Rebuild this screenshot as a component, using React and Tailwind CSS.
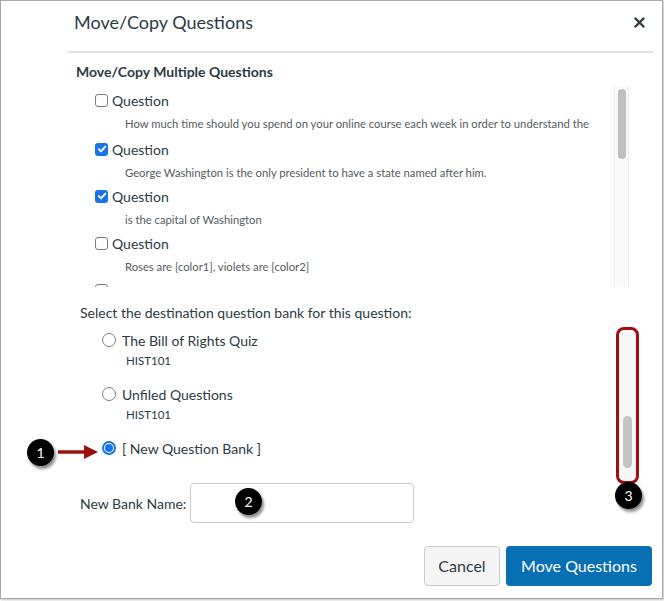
import React from 'react';

const questions = [
  { checked: false, text: 'How much time should you spend on your online course each week in order to understand the' },
  { checked: true, text: 'George Washington is the only president to have a state named after him.' },
  { checked: true, text: 'is the capital of Washington' },
  { checked: false, text: 'Roses are [color1], violets are [color2]' },
];

const banks = [
  { name: 'The Bill of Rights Quiz', course: 'HIST101' },
  { name: 'Unfiled Questions', course: 'HIST101' },
];

function Badge({ n, className }) {
  return (
    <div
      className={`absolute w-[27px] h-[27px] rounded-full bg-black text-white text-[14px] flex items-center justify-center shadow-[2px_3px_3px_rgba(0,0,0,0.45)] ${className}`}
    >
      {n}
    </div>
  );
}

function Checkbox({ checked }) {
  if (checked) {
    return (
      <span className="w-[13px] h-[13px] rounded-[3px] bg-[#1a73e8] flex items-center justify-center">
        <svg width="10" height="10" viewBox="0 0 10 10">
          <path d="M1.8 5.2 L4 7.4 L8.3 2.6" fill="none" stroke="white" strokeWidth="1.9" strokeLinecap="round" strokeLinejoin="round" />
        </svg>
      </span>
    );
  }
  return <span className="w-[13px] h-[13px] rounded-[3px] border border-[#7d7d7d] bg-white" />;
}

function Radio({ checked }) {
  if (checked) {
    return (
      <span className="w-[14px] h-[14px] rounded-full border-[2px] border-[#1a73e8] flex items-center justify-center">
        <span className="w-[8px] h-[8px] rounded-full bg-[#1a73e8]" />
      </span>
    );
  }
  return <span className="w-[14px] h-[14px] rounded-full border border-[#7d7d7d] bg-white" />;
}

export default function App() {
  return (
    <div className="w-[664px] h-[601px] bg-white relative text-[#2d3b45]" style={{ fontFamily: 'Lato, "Open Sans", sans-serif' }}>
      <div className="w-[663px] h-[599px] border border-[#a9a9a9] shadow-[1px_1px_2px_rgba(0,0,0,0.25)] bg-white">
        {/* header */}
        <div className="ml-[67px] w-[585px] h-[52px] border-b-2 border-[#dfe3e6] flex items-start justify-between pt-[9px]">
          <h1 className="pl-[6px] text-[18px] leading-[24px]">Move/Copy Questions</h1>
          <svg width="11" height="11" viewBox="0 0 11 11" className="mt-[7px] mr-[8px]">
            <path d="M1.5 1.5 L9.5 9.5 M9.5 1.5 L1.5 9.5" stroke="#2d3b45" strokeWidth="2.4" strokeLinecap="round" />
          </svg>
        </div>

        {/* multiple questions */}
        <div className="ml-[75px] w-[553px]">
          <h2 className="mt-[9px] text-[14px] leading-[20px] font-bold">Move/Copy Multiple Questions</h2>
          <div className="mt-[4px] h-[201px] flex overflow-hidden">
            <div className="flex-1 pt-[4px] pl-[19px]">
              {questions.map((q, i) => (
                <div key={i} className={i === 0 ? 'mb-[7px]' : 'mb-[5px]'}>
                  <div className="h-[20px] flex items-center gap-[4px] text-[14px]">
                    <Checkbox checked={q.checked} />
                    <span>Question</span>
                  </div>
                  <div className="mt-[6px] h-[16px] pl-[30px] text-[11.25px] leading-[16px] text-[#555c61] whitespace-nowrap">{q.text}</div>
                </div>
              ))}
              <div className="h-[20px] flex items-center">
                <Checkbox checked={false} />
              </div>
            </div>
            <div className="w-[15px] h-full bg-[#fafafa] border-x border-[#ececec] pt-[3px] flex justify-center">
              <div className="w-[8px] h-[70px] rounded-full bg-[#c1c1c1]" />
            </div>
          </div>
        </div>

        {/* destination */}
        <div className="ml-[79px]">
          <p className="mt-[16px] text-[14px] leading-[20px]">Select the destination question bank for this question:</p>
          <div className="mt-[7px] pl-[22px]">
            {banks.map((b) => (
              <div key={b.name} className="h-[54px]">
                <div className="h-[20px] flex items-center gap-[6px] text-[14px]">
                  <Radio checked={false} />
                  <span>{b.name}</span>
                </div>
                <div className="mt-[3px] pl-[24px] text-[11.5px] leading-[16px]">{b.course}</div>
              </div>
            ))}
            <div className="h-[20px] flex items-center gap-[6px] text-[14px]">
              <Radio checked />
              <span>[ New Question Bank ]</span>
            </div>
          </div>
          <div className="mt-[25px] flex items-center gap-[4px]">
            <span className="text-[14px]">New Bank Name:</span>
            <div className="w-[224px] h-[40px] border border-[#c7cdd1] rounded-[4px] bg-white" />
          </div>
        </div>

        {/* footer */}
        <div className="mt-[23px] mr-[10px] flex justify-end gap-[6px]">
          <button className="w-[76px] h-[40px] rounded-[4px] border border-[#c7cdd1] bg-[#f5f5f5] text-[16px] text-[#2d3b45]">Cancel</button>
          <button className="w-[146px] h-[40px] rounded-[4px] bg-[#0770b3] text-[16px] text-white">Move Questions</button>
        </div>
      </div>

      {/* annotations */}
      <div className="absolute left-[616px] top-[327px] w-[23px] h-[157px] rounded-[8px] border-[3px] border-[#a30d12] bg-[#f7f7f7] flex justify-center">
        <div className="mt-[86px] w-[9px] h-[52px] rounded-full bg-[#c4c4c4]" />
      </div>
      <svg className="absolute left-[56px] top-[444px]" width="44" height="16" viewBox="0 0 44 16">
        <path d="M2 8 H30" stroke="#9b1111" strokeWidth="3.5" />
        <path d="M28 1 L42 8 L28 15 Z" fill="#9b1111" />
      </svg>
      <Badge n="1" className="left-[27px] top-[439px]" />
      <Badge n="2" className="left-[235px] top-[488px]" />
      <Badge n="3" className="left-[615px] top-[482px]" />
    </div>
  );
}
